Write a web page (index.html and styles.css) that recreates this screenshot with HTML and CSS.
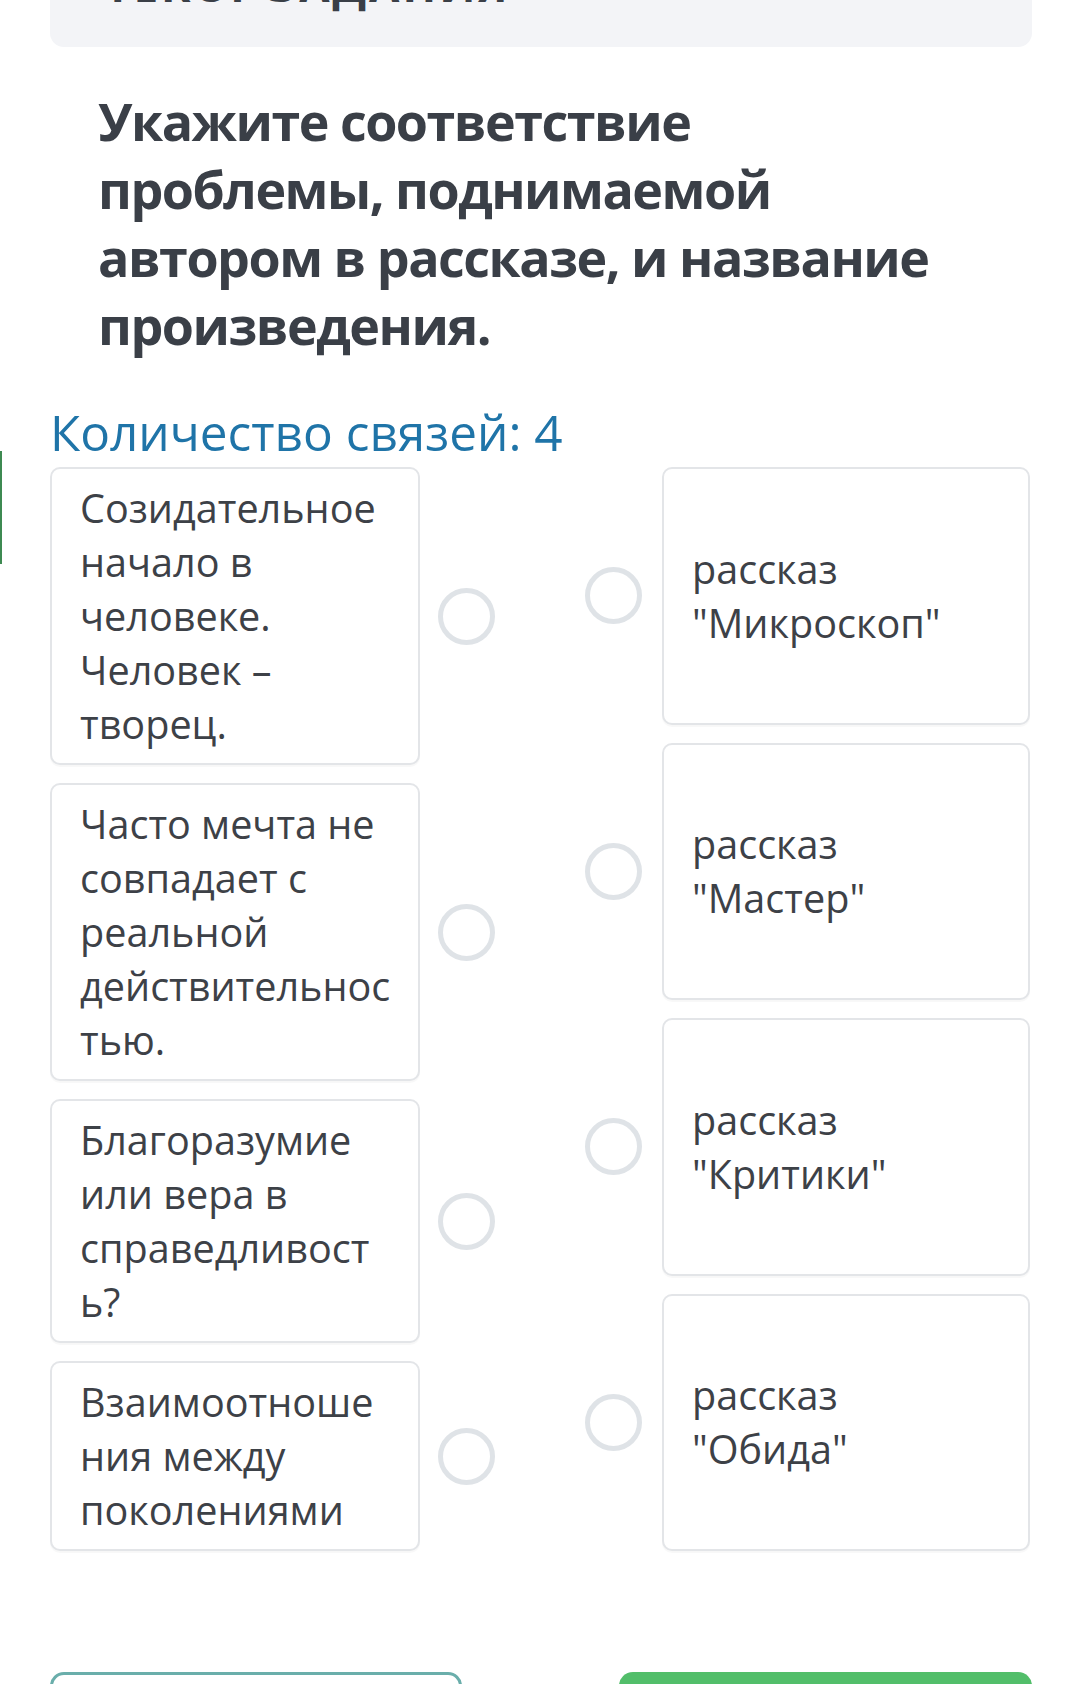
FILE: index.html
```html
<!DOCTYPE html>
<html lang="ru">
<head>
<meta charset="utf-8">
<title>Задание</title>
<link rel="stylesheet" href="styles.css">
</head>
<body>
<div class="page">
  <div class="task-box">
    <div class="task-title">ТЕКСТ ЗАДАНИЯ</div>
  </div>

  <h1 class="question">Укажите соответствие проблемы, поднимаемой автором в рассказе, и название произведения.</h1>

  <div class="count-wrap">
    <span class="side-mark"></span>
    <div class="count">Количество связей: 4</div>
  </div>

  <div class="match">
    <div class="col col-left">
      <div class="row">
        <div class="card card-left">Созидательное начало в человеке. Человек – творец.</div>
        <span class="dot"></span>
      </div>
      <div class="row">
        <div class="card card-left">Часто мечта не совпадает с реальной действительностью.</div>
        <span class="dot"></span>
      </div>
      <div class="row">
        <div class="card card-left">Благоразумие или вера в справедливость?</div>
        <span class="dot"></span>
      </div>
      <div class="row">
        <div class="card card-left">Взаимоотношения между поколениями</div>
        <span class="dot"></span>
      </div>
    </div>

    <div class="col col-right">
      <div class="row row-right">
        <span class="dot"></span>
        <div class="card card-right">рассказ<br>"Микроскоп"</div>
      </div>
      <div class="row row-right">
        <span class="dot"></span>
        <div class="card card-right">рассказ<br>"Мастер"</div>
      </div>
      <div class="row row-right">
        <span class="dot"></span>
        <div class="card card-right">рассказ<br>"Критики"</div>
      </div>
      <div class="row row-right">
        <span class="dot"></span>
        <div class="card card-right">рассказ<br>"Обида"</div>
      </div>
    </div>
  </div>

  <div class="buttons">
    <div class="btn btn-outline"></div>
    <div class="btn btn-green"></div>
  </div>
</div>
</body>
</html>
```

FILE: styles.css
```css
html, body {
  margin: 0;
  padding: 0;
  background: #ffffff;
}

body {
  font-family: "Open Sans", "Noto Sans", "DejaVu Sans", sans-serif;
  color: #3d4147;
  overflow: hidden;
  height: 1684px;
}

.page {
  padding: 0 48px 0 50px;
}

.task-box {
  margin-top: -78px;
  background: #f3f4f7;
  border-radius: 14px;
  padding: 37px 52px 35px 55px;
}

.task-title {
  font-size: 44px;
  line-height: 53px;
  font-weight: 700;
  color: #3a3f47;
  letter-spacing: 3px;
}

.question {
  margin: 40px 0 0 0;
  padding: 0 50px 0 48px;
  font-size: 52px;
  line-height: 68px;
  font-weight: 700;
  letter-spacing: -1.5px;
  color: #3a3f47;
}

.count-wrap {
  position: relative;
  margin-top: 42px;
}

.count {
  font-size: 49.5px;
  line-height: 62px;
  color: #1f74a8;
}

.side-mark {
  position: absolute;
  left: -50px;
  top: 50px;
  width: 2px;
  height: 113px;
  background: #3e8a52;
}

.match {
  margin-top: 4px;
  padding-right: 2px;
  display: grid;
  grid-template-columns: 445px 445px;
  justify-content: space-between;
}

.col {
  display: flex;
  flex-direction: column;
  gap: 18px;
}

.row {
  display: flex;
  align-items: center;
  gap: 18px;
}

.row-right {
  flex: 1;
  gap: 20px;
}

.card {
  box-sizing: border-box;
  border: 2px solid #e3e5e8;
  border-radius: 10px;
  background: #ffffff;
  font-size: 39.6px;
  line-height: 54px;
  color: #3d4147;
  box-shadow: 0 2px 1px rgba(0, 0, 0, 0.03);
}

.card-left {
  width: 370px;
  padding: 12px 27px 12px 28px;
  overflow-wrap: anywhere;
}

.card-right {
  align-self: stretch;
  flex: 1;
  display: flex;
  align-items: center;
  padding: 0 24px 0 28px;
}

.dot {
  flex: none;
  box-sizing: border-box;
  width: 57px;
  height: 57px;
  border: 5px solid #dfe3e7;
  border-radius: 50%;
}

.buttons {
  margin-top: 121px;
  display: flex;
  justify-content: space-between;
}

.btn {
  box-sizing: border-box;
  height: 80px;
  width: 412px;
  border-radius: 14px;
}

.btn-outline {
  border: 3px solid #6aaeab;
  background: #ffffff;
}

.btn-green {
  width: 413px;
  background: #52be6a;
}
```
